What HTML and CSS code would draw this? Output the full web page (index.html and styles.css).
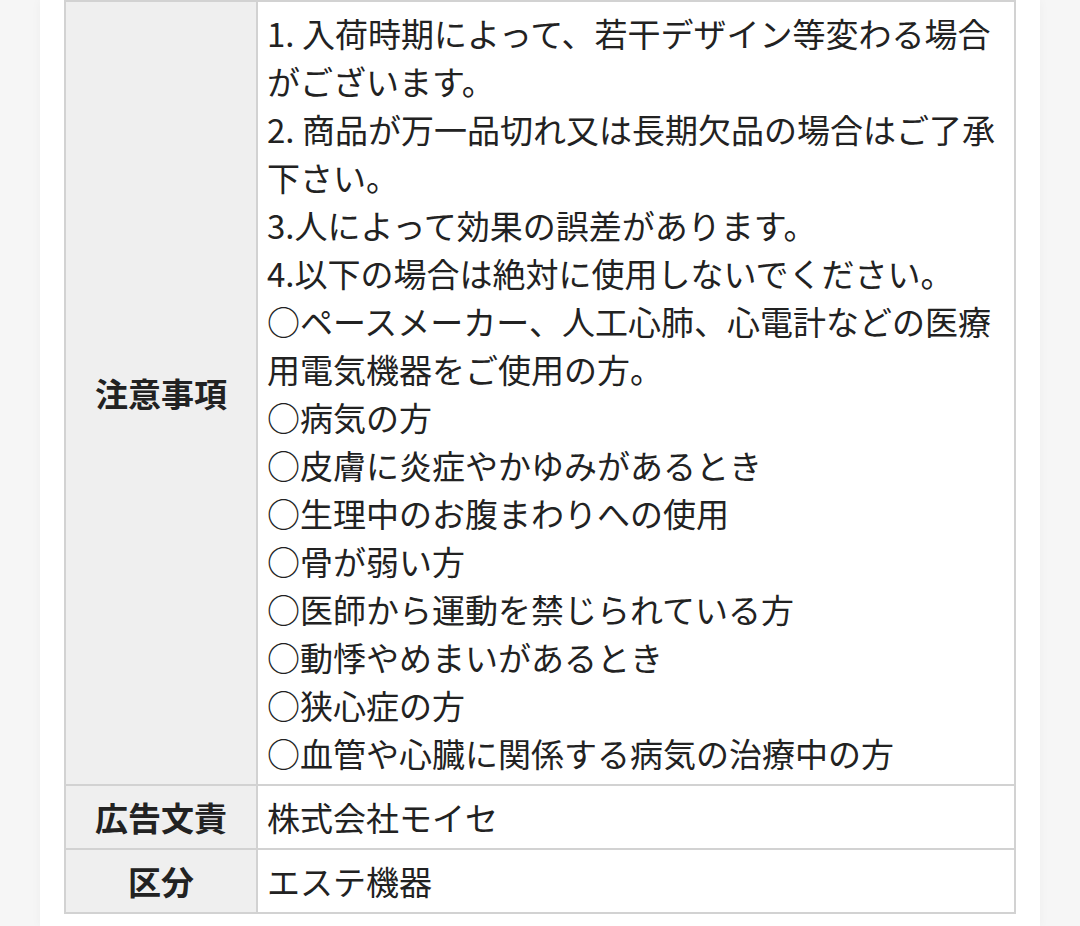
FILE: index.html
```html
<!DOCTYPE html>
<html lang="ja">
<head>
  <meta charset="UTF-8">
  <meta name="viewport" content="width=device-width, initial-scale=1.0">
  <title>商品詳細</title>
  <link rel="stylesheet" href="styles.css">
</head>
<body>
  <div class="page">
    <table class="spec">
      <tr>
        <th>注意事項</th>
        <td>
          1. 入荷時期によって、若干デザイン等変わる場合がございます。<br>
          2. 商品が万一品切れ又は長期欠品の場合はご了承下さい。<br>
          3.人によって効果の誤差があります。<br>
          4.以下の場合は絶対に使用しないでください。<br>
          ○ペースメーカー、人工心肺、心電計などの医療用電気機器をご使用の方。<br>
          ○病気の方<br>
          ○皮膚に炎症やかゆみがあるとき<br>
          ○生理中のお腹まわりへの使用<br>
          ○骨が弱い方<br>
          ○医師から運動を禁じられている方<br>
          ○動悸やめまいがあるとき<br>
          ○狭心症の方<br>
          ○血管や心臓に関係する病気の治療中の方
        </td>
      </tr>
      <tr>
        <th>広告文責</th>
        <td>株式会社モイセ</td>
      </tr>
      <tr>
        <th>区分</th>
        <td>エステ機器</td>
      </tr>
    </table>
  </div>
</body>
</html>
```

FILE: styles.css
```css
body {
  margin: 0;
  background: #f6f6f6;
  font-family: "Noto Sans CJK JP", "Noto Sans", sans-serif;
  color: #222;
}
.page {
  width: 1000px;
  margin: 0 auto;
  padding: 0 24px 13px;
  box-sizing: border-box;
  background: #fff;
  box-shadow: 0 0 10px rgba(0, 0, 0, 0.04);
}
.spec {
  width: 100%;
  border-collapse: collapse;
  border: 2px solid #d2d2d2;
  font-size: 33px;
  line-height: 48px;
}
.spec th,
.spec td {
  border: 2px solid #d2d2d2;
  padding: 7px 10px 7px 9px;
  vertical-align: middle;
}
.spec th {
  width: 174px;
  padding: 7px 8px;
  background: #efefef;
  font-weight: bold;
  text-align: center;
  white-space: nowrap;
}
.spec td {
  text-align: left;
}
```
